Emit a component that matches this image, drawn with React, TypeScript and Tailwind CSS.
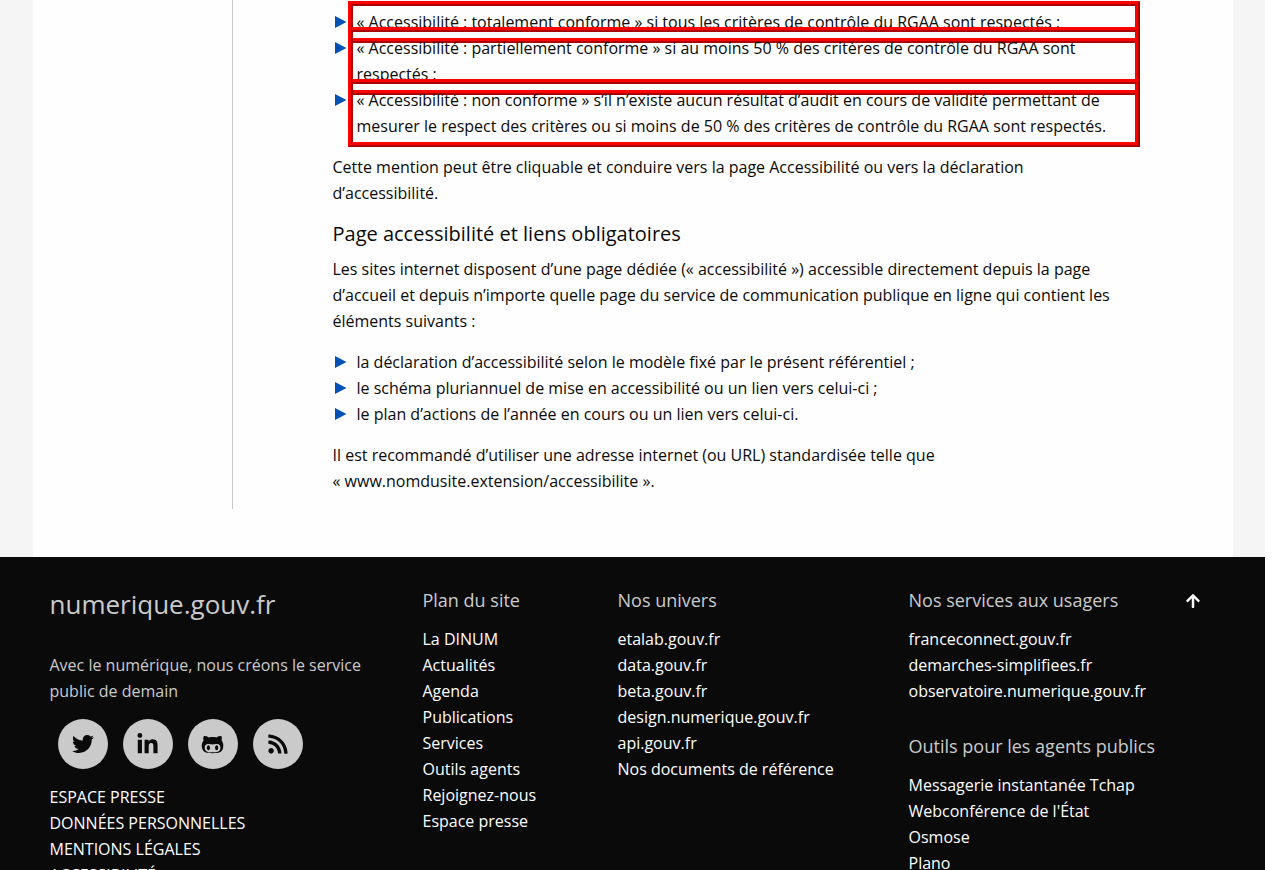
import type { ReactNode } from "react";
import { FaArrowUp, FaGithubAlt, FaLinkedinIn, FaRss, FaTwitter } from "react-icons/fa";

const statuses = [
  "« Accessibilité : totalement conforme » si tous les critères de contrôle du RGAA sont respectés ;",
  "« Accessibilité : partiellement conforme » si au moins 50 % des critères de contrôle du RGAA sont respectés ;",
  "« Accessibilité : non conforme » s’il n’existe aucun résultat d’audit en cours de validité permettant de mesurer le respect des critères ou si moins de 50 % des critères de contrôle du RGAA sont respectés.",
];

const requirements = [
  "la déclaration d’accessibilité selon le modèle fixé par le présent référentiel ;",
  "le schéma pluriannuel de mise en accessibilité ou un lien vers celui-ci ;",
  "le plan d’actions de l’année en cours ou un lien vers celui-ci.",
];

const sitemap = ["La DINUM", "Actualités", "Agenda", "Publications", "Services", "Outils agents", "Rejoignez-nous", "Espace presse"];
const universe = ["etalab.gouv.fr", "data.gouv.fr", "beta.gouv.fr", "design.numerique.gouv.fr", "api.gouv.fr", "Nos documents de référence"];
const services = ["franceconnect.gouv.fr", "demarches-simplifiees.fr", "observatoire.numerique.gouv.fr"];
const tools = ["Messagerie instantanée Tchap", "Webconférence de l'État", "Osmose", "Plano"];
const legal = ["ESPACE PRESSE", "DONNÉES PERSONNELLES", "MENTIONS LÉGALES", "ACCESSIBILITÉ"];

const socials = [
  { label: "Twitter", icon: <FaTwitter className="size-[22px]" /> },
  { label: "LinkedIn", icon: <FaLinkedinIn className="size-[23px]" /> },
  { label: "GitHub", icon: <FaGithubAlt className="size-[23px]" /> },
  { label: "Flux RSS", icon: <FaRss className="size-[22px]" /> },
];

function Bullets({ items, outlined = false }: { items: string[]; outlined?: boolean }) {
  return (
    <ul className="mb-[15px]">
      {items.map((item) => (
        <li key={item} className="flex items-start gap-[9px]">
          <svg viewBox="0 0 12 12" className="ml-0.5 mt-[7px] size-3 shrink-0 fill-[#0053b3]" aria-hidden="true">
            <path d="M0 0 11.5 6 0 12Z" />
          </svg>
          <span className={outlined ? "flex-1 pl-px outline-[5px] outline-offset-3 outline-[red] [outline-style:ridge]" : "flex-1 pl-px"}>
            {item}
          </span>
        </li>
      ))}
    </ul>
  );
}

function Links({ items }: { items: string[] }) {
  return (
    <ul className="text-[#fefefe]">
      {items.map((item) => (
        <li key={item}>
          <a href="#">{item}</a>
        </li>
      ))}
    </ul>
  );
}

function Heading({ children }: { children: ReactNode }) {
  return <h2 className="mb-3.5 text-[18px] leading-6">{children}</h2>;
}

export default function App() {
  return (
    <div className="h-screen overflow-hidden bg-white pr-[15px] font-['Open_Sans',sans-serif] text-base leading-[26px] text-[#0a0a0a]">
      <div className="bg-[#f5f5f5]">
        <main className="mx-auto max-w-[1200px] bg-[#fefefe] pb-12 pl-[199px]">
          <article className="border-l border-[#cacaca] pb-[15px] pl-[100px] pr-[101px] pt-[9px]">
            <Bullets items={statuses} outlined />
            <p className="mb-3.5">
              Cette mention peut être cliquable et conduire vers la page Accessibilité ou vers la déclaration d’accessibilité.
            </p>
            <h3 className="mb-2 text-xl leading-7">Page accessibilité et liens obligatoires</h3>
            <p className="mb-[15px]">
              Les sites internet disposent d’une page dédiée (« accessibilité ») accessible directement depuis la page
              d’accueil et depuis n’importe quelle page du service de communication publique en ligne qui contient les
              éléments suivants :
            </p>
            <Bullets items={requirements} />
            <p>
              Il est recommandé d’utiliser une adresse internet (ou URL) standardisée telle que
              <br />« www.nomdusite.extension/accessibilite ».
            </p>
          </article>
        </main>
      </div>

      <footer className="bg-[#0a0a0a] text-[#cacaca]">
        <div className="mx-auto grid max-w-[1200px] grid-cols-[373fr_195fr_291fr_307fr] px-[17px] pt-[31px]">
          <section>
            <p className="mb-8 text-[26px] leading-8">numerique.gouv.fr</p>
            <p className="mb-[15px] max-w-[340px]">Avec le numérique, nous créons le service public de demain</p>
            <ul className="mb-[15px] flex gap-[15px] pl-2">
              {socials.map(({ label, icon }) => (
                <li key={label}>
                  <a href="#" aria-label={label} className="flex size-[50px] items-center justify-center rounded-full bg-[#cacaca] text-[#0a0a0a]">
                    {icon}
                  </a>
                </li>
              ))}
            </ul>
            <Links items={legal} />
          </section>
          <section>
            <Heading>Plan du site</Heading>
            <Links items={sitemap} />
          </section>
          <section>
            <Heading>Nos univers</Heading>
            <Links items={universe} />
          </section>
          <div className="flex items-start justify-between pr-[15px]">
            <div className="flex flex-col gap-[30px]">
              <section>
                <Heading>Nos services aux usagers</Heading>
                <Links items={services} />
              </section>
              <section>
                <Heading>Outils pour les agents publics</Heading>
                <Links items={tools} />
              </section>
            </div>
            <a href="#" aria-label="Haut de page" className="flex h-[26px] items-center text-[#fefefe]">
              <FaArrowUp className="size-4" />
            </a>
          </div>
        </div>
      </footer>
    </div>
  );
}
